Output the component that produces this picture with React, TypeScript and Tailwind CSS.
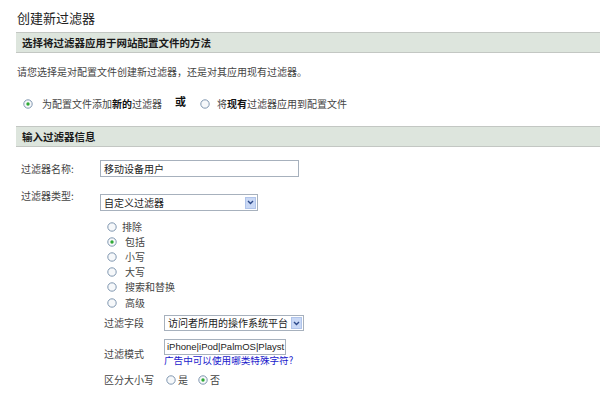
import React from "react";

const font = { fontFamily: '"Noto Sans CJK SC", "Liberation Sans", sans-serif' };

function Radio({ checked }: { checked?: boolean }) {
  return (
    <svg width="10" height="10" viewBox="0 0 10 10" className="shrink-0">
      <circle cx="5" cy="5" r="4.2" fill="#f6f8fa" stroke="#8097b0" strokeWidth="1" />
      {checked && <circle cx="5" cy="5" r="1.7" fill="#2faa35" />}
    </svg>
  );
}

function SelectBox({ value, width }: { value: string; width: string }) {
  return (
    <div className={`${width} h-[16px] border border-[#a7b1bd] bg-white flex items-center justify-between pl-[3px] pr-[1px]`}>
      <span className="text-[10px] leading-[14px] text-[#222] whitespace-nowrap overflow-hidden">{value}</span>
      <div className="w-[11px] h-[12px] bg-[#c9d8f5] border border-[#b0c4ea] flex items-center justify-center shrink-0">
        <svg width="7" height="5" viewBox="0 0 7 5">
          <path d="M1 1 L3.5 3.5 L6 1" fill="none" stroke="#2d4a8a" strokeWidth="1.4" />
        </svg>
      </div>
    </div>
  );
}

function SectionBar({ title }: { title: string }) {
  return (
    <div className="h-[21px] bg-[#dde5dd] border-t border-b border-[#c3c7c3] flex items-center pl-[6px]">
      <span className="text-[10.5px] font-bold text-[#1a1a1a] leading-[14px]">{title}</span>
    </div>
  );
}

const filterTypes = ["排除", "包括", "小写", "大写", "搜索和替换", "高级"];

export default function App() {
  return (
    <div className="w-[600px] h-[401px] bg-white overflow-hidden pl-4 text-[#333]" style={font}>
      <div className="h-[32px] pt-[4px] pl-[1px]">
        <span className="text-[13px] leading-[16px] text-[#222]">创建新过滤器</span>
      </div>

      <SectionBar title="选择将过滤器应用于网站配置文件的方法" />

      <div className="mt-[12px] pl-[1px] text-[10px] leading-[14px] text-[#444]">
        请您选择是对配置文件创建新过滤器，还是对其应用现有过滤器。
      </div>

      <div className="mt-[18px] h-[14px] flex items-center text-[10px] leading-[14px] text-[#444]">
        <div className="ml-[7px]"><Radio checked /></div>
        <span className="ml-[9px]">
          为配置文件添加<b className="text-[#111]">新的</b>过滤器
        </span>
        <span className="ml-[13px] -mt-[6px] font-bold text-[11px] text-[#111]">或</span>
        <div className="ml-[14px]"><Radio /></div>
        <span className="ml-[7px]">
          将<b className="text-[#111]">现有</b>过滤器应用到配置文件
        </span>
      </div>

      <div className="mt-[15px]">
        <SectionBar title="输入过滤器信息" />
      </div>

      <div className="mt-[13px] flex items-center h-[17px]">
        <span className="pl-[5px] w-[84px] text-[10px] leading-[14px] text-[#444]">过滤器名称:</span>
        <div className="w-[199px] h-[17px] border border-[#a7b1bd] bg-white flex items-center pl-[3px]">
          <span className="text-[10px] leading-[14px] text-[#222]">移动设备用户</span>
        </div>
      </div>

      <div className="mt-[12px] flex items-start">
        <span className="pl-[5px] w-[84px] text-[10px] leading-[14px] text-[#444]">过滤器类型:</span>
        <div className="mt-[5px]">
          <SelectBox value="自定义过滤器" width="w-[158px] h-[17px]" />
        </div>
      </div>

      <div className="mt-[8px] pl-[91px] flex flex-col">
        {filterTypes.map((t, i) => (
          <div key={t} className="h-[15.2px] flex items-center text-[10px] leading-[14px] text-[#444]">
            <Radio checked={i === 1} />
            <span className={i === 0 ? "ml-[5px]" : "ml-[8px]"}>{t}</span>
          </div>
        ))}
      </div>

      <div className="mt-[5px] pl-[88px] flex flex-col text-[10px] leading-[14px] text-[#444]">
        <div className="flex items-center h-[16px]">
          <span className="w-[60px]">过滤字段</span>
          <SelectBox value="访问者所用的操作系统平台" width="w-[140px]" />
        </div>

        <div className="mt-[8px] flex items-center">
          <span className="w-[60px] pt-[2px]">过滤模式</span>
          <div className="flex flex-col">
            <div className="w-[122px] h-[16px] border border-[#a7b1bd] bg-white flex items-center pl-[2px] overflow-hidden">
              <span className="text-[9.5px] leading-[14px] text-[#222] whitespace-nowrap" style={{ fontFamily: '"Liberation Sans", "Noto Sans CJK SC", sans-serif' }}>
                iPhone|iPod|PalmOS|Playst
              </span>
            </div>
            <a className="text-[9.6px] leading-[11px] text-[#1a1acc] whitespace-nowrap">广告中可以使用哪类特殊字符?</a>
          </div>
        </div>

        <div className="mt-[7px] flex items-center h-[14px]">
          <span className="w-[60px]">区分大小写</span>
          <div className="ml-[2px]"><Radio /></div>
          <span className="ml-[2px]">是</span>
          <div className="ml-[10px]"><Radio checked /></div>
          <span className="ml-[2px]">否</span>
        </div>
      </div>
    </div>
  );
}
